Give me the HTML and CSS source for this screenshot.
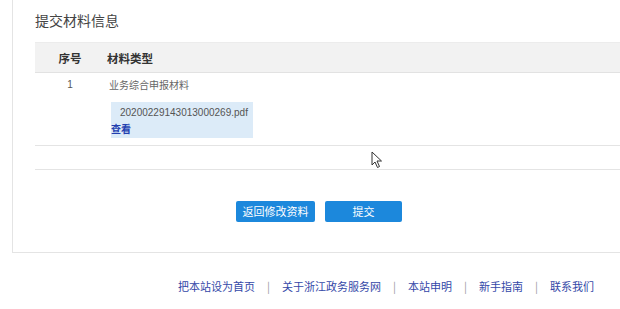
FILE: index.html
```html
<!DOCTYPE html>
<html lang="zh-CN">
<head>
<meta charset="utf-8">
<title>提交材料信息</title>
<link rel="stylesheet" href="styles.css">
</head>
<body>
<div class="page">
  <div class="card">
    <h2 class="title">提交材料信息</h2>
    <div class="table">
      <div class="thead">
        <div class="col-no">序号</div>
        <div class="col-type">材料类型</div>
      </div>
      <div class="row">
        <div class="col-no cell-no">1</div>
        <div class="col-type">
          <div class="type-name">业务综合申报材料</div>
          <div class="file">
            <div class="file-name">20200229143013000269.pdf</div>
            <a class="file-view">查看</a>
          </div>
        </div>
      </div>
      <div class="row row-empty"></div>
    </div>
    <div class="actions">
      <button class="btn btn-back">返回修改资料</button>
      <button class="btn btn-submit">提交</button>
    </div>
  </div>
  <div class="footer">
    <a>把本站设为首页</a><span class="sep">|</span>
    <a>关于浙江政务服务网</a><span class="sep">|</span>
    <a>本站申明</a><span class="sep">|</span>
    <a>新手指南</a><span class="sep">|</span>
    <a>联系我们</a>
  </div>
  <svg class="cursor" width="12" height="18" viewBox="0 0 12 18">
    <path d="M1 1 L1 14 L4 11 L6.5 16.5 L8.5 15.5 L6 10 L10.5 10 Z" fill="#fff" stroke="#333" stroke-width="1" stroke-linejoin="round"/>
  </svg>
</div>
</body>
</html>
```

FILE: styles.css
```css
html, body {
  margin: 0;
  padding: 0;
  background: #ffffff;
  overflow: hidden;
}
body {
  width: 620px;
  height: 309px;
  font-family: "Noto Sans CJK SC", "Liberation Sans", sans-serif;
  color: #333;
}
.page {
  position: relative;
  width: 620px;
  height: 309px;
  overflow: hidden;
}
.card {
  margin-left: 12px;
  width: 640px;
  border-left: 1px solid #e4e4e4;
  border-bottom: 1px solid #e4e4e4;
  padding-left: 22px;
  padding-bottom: 30px;
  box-sizing: border-box;
  background: #fff;
}
.title {
  margin: 0;
  padding-top: 8px;
  height: 42px;
  box-sizing: border-box;
  font-size: 14px;
  line-height: 24px;
  font-weight: normal;
  color: #444;
}
.table {
  width: 100%;
}
.thead {
  display: flex;
  height: 31px;
  box-sizing: border-box;
  align-items: center;
  background: #f2f2f2;
  border-top: 1px solid #ececec;
  border-bottom: 1px solid #e2e2e2;
  font-size: 11.5px;
  font-weight: bold;
  color: #333;
}
.col-no {
  width: 70px;
  flex: none;
  text-align: center;
}
.col-type {
  flex: 1;
  padding-left: 2px;
}
.row {
  display: flex;
  border-bottom: 1px solid #e4e4e4;
}
.cell-no {
  font-family: "Liberation Sans", sans-serif;
  font-size: 10px;
  color: #555;
  padding-top: 5px;
  line-height: 14px;
}
.row .col-type {
  padding-left: 4px;
}
.type-name {
  font-size: 10px;
  line-height: 14px;
  padding-top: 5px;
  color: #666;
}
.file {
  margin-top: 10px;
  margin-bottom: 7px;
  margin-left: 2px;
  width: 142px;
  height: 36px;
  box-sizing: border-box;
  background: #dcebf8;
  padding-top: 2px;
}
.file-name {
  font-family: "Liberation Sans", sans-serif;
  font-size: 10px;
  line-height: 18px;
  color: #555;
  padding-left: 9px;
}
.file-view {
  display: block;
  font-size: 10px;
  line-height: 14px;
  font-weight: bold;
  color: #2340b0;
}
.row-empty {
  height: 23px;
}
.actions {
  display: flex;
  gap: 10px;
  padding-left: 201px;
  padding-top: 31px;
}
.btn {
  height: 21px;
  border: none;
  border-radius: 2px;
  background: #1c88dc;
  color: #fff;
  font-family: "Noto Sans CJK SC", sans-serif;
  font-size: 11px;
  line-height: 21px;
  padding: 0;
}
.btn-back {
  width: 79px;
}
.btn-submit {
  width: 77px;
}
.footer {
  display: flex;
  justify-content: flex-end;
  align-items: center;
  padding-right: 26px;
  margin-top: 25px;
  height: 16px;
  font-size: 11px;
  color: #3448a8;
}
.footer a {
  color: #3448a8;
}
.sep {
  color: #999;
  margin: 0 12px;
}
.cursor {
  position: absolute;
  left: 371px;
  top: 151px;
}
```
